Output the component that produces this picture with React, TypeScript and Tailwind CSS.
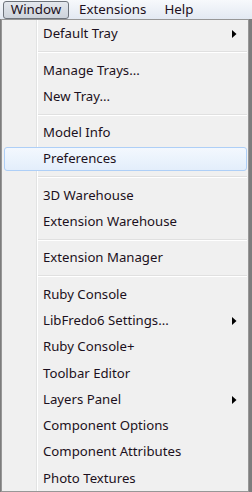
import React from 'react'

type Entry = { label: string; sub?: boolean; hot?: boolean } | 'sep'

const ITEMS: Entry[] = [
  { label: 'Default Tray', sub: true },
  'sep',
  { label: 'Manage Trays...' },
  { label: 'New Tray...' },
  'sep',
  { label: 'Model Info' },
  { label: 'Preferences', hot: true },
  'sep',
  { label: '3D Warehouse' },
  { label: 'Extension Warehouse' },
  'sep',
  { label: 'Extension Manager' },
  'sep',
  { label: 'Ruby Console' },
  { label: 'LibFredo6 Settings...', sub: true },
  { label: 'Ruby Console+' },
  { label: 'Toolbar Editor' },
  { label: 'Layers Panel', sub: true },
  { label: 'Component Options' },
  { label: 'Component Attributes' },
  { label: 'Photo Textures' },
]

export default function App() {
  return (
    <div
      className="w-[252px] h-[492px] overflow-hidden bg-[#7d7d7d] text-[#1c1020]"
      style={{ fontFamily: '"Noto Sans", "Open Sans", sans-serif' }}
    >
      <div className="h-[19px] flex items-center bg-gradient-to-b from-[#f7f9fc] to-[#e3e9f2] text-[13.3px]">
        <div className="ml-[3px] h-[18px] w-[66px] flex items-center justify-center rounded-[3px] border border-[#6e747c] bg-gradient-to-b from-[#e4e8ee] to-[#cdd3db]">
          Window
        </div>
        <span className="ml-[10px]">Extensions</span>
        <span className="ml-[18px]">Help</span>
      </div>

      <div className="ml-px w-[248px] h-[473px] border border-[#979797] bg-[#f0f0f0] relative pt-[1px] pl-[2px] pr-[1px]">
        <div className="absolute left-[34px] top-0 bottom-0 w-px bg-[#e2e3e3]" />
        <div className="absolute left-[35px] top-0 bottom-0 w-px bg-white" />
        {ITEMS.map((it, i) =>
          it === 'sep' ? (
            <div key={i} className="h-[10px] pl-[34px] flex flex-col justify-center">
              <div className="h-px bg-[#e0e0e0]" />
              <div className="h-px bg-white" />
            </div>
          ) : (
            <Item key={i} label={it.label} sub={it.sub} hot={it.hot} />
          ),
        )}
      </div>
    </div>
  )
}

function Item({ label, sub, hot }: { label: string; sub?: boolean; hot?: boolean }) {
  return (
    <div className="relative h-[26.3px] flex items-center">
      <div
        className={
          'w-full h-[24px] flex items-center text-[13.2px] pl-[38px] rounded-[3px] ' +
          (hot ? 'border border-[#aecff7] bg-gradient-to-b from-[#f3f8fe] to-[#e3eefb]' : 'border border-transparent')
        }
      >
        {label}
      </div>
      {sub && (
        <svg className="absolute right-[10px] top-[9px]" width="5" height="8" viewBox="0 0 5 8">
          <path d="M0 0 L4.5 4 L0 8 Z" fill="#000" />
        </svg>
      )}
    </div>
  )
}
